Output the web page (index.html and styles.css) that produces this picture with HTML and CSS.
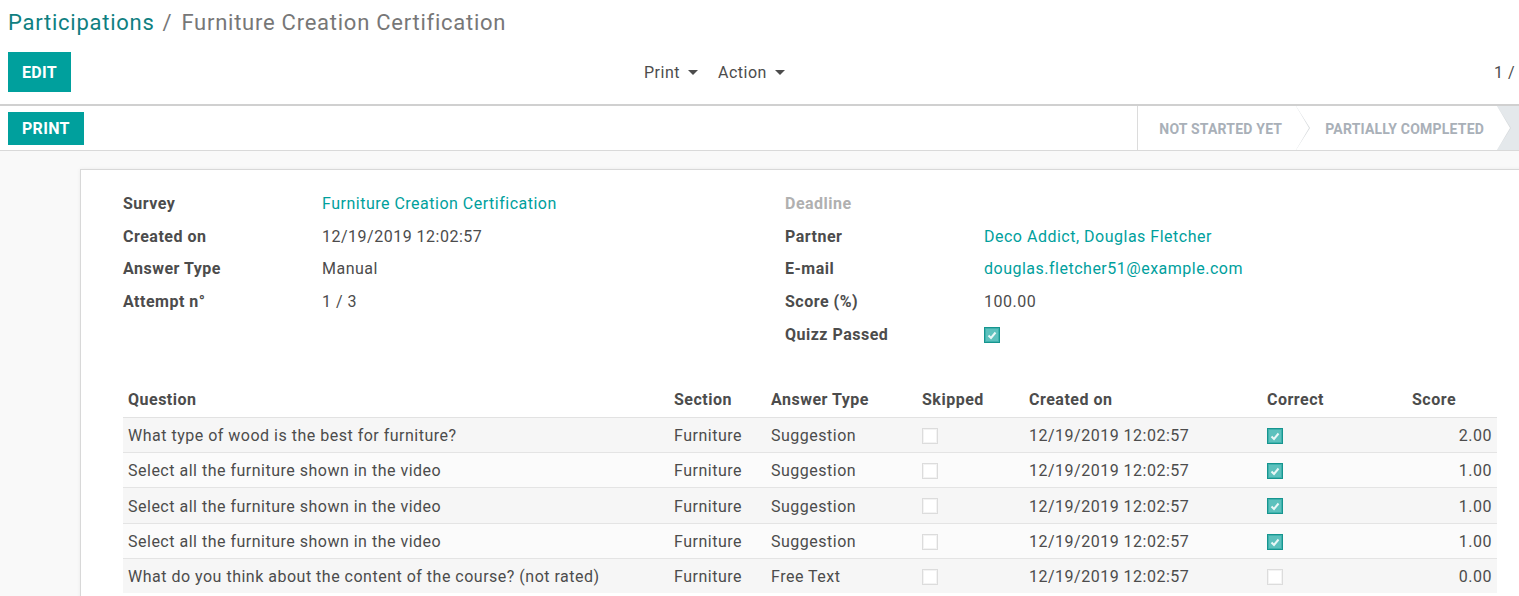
FILE: index.html
```html
<!DOCTYPE html>
<html lang="en">
<head>
<meta charset="utf-8">
<title>Participations / Furniture Creation Certification</title>
<link rel="stylesheet" href="styles.css">
</head>
<body>
<div class="cp">
  <div class="breadcrumb">
    <a class="bc-link">Participations</a><span class="bc-sep">/</span><span class="bc-cur">Furniture Creation Certification</span>
  </div>
  <div class="cp-row">
    <div class="cp-buttons"><button class="btn btn-edit">EDIT</button></div>
    <div class="cp-sidebar">
      <span class="dd">Print<span class="caret"></span></span>
      <span class="dd">Action<span class="caret"></span></span>
    </div>
    <div class="pager">1 /</div>
  </div>
</div>
<div class="statusbar">
  <div class="sb-buttons"><button class="btn btn-print">PRINT</button></div>
  <div class="sb-states">
    <div class="state first">NOT STARTED YET</div>
    <div class="state second">PARTIALLY COMPLETED</div>
    <div class="state current"></div>
  </div>
</div>
<div class="content">
  <div class="sheet">
    <div class="groups">
      <div class="group">
        <div class="label">Survey</div><div class="value"><a class="link">Furniture Creation Certification</a></div>
        <div class="label">Created on</div><div class="value">12/19/2019 12:02:57</div>
        <div class="label">Answer Type</div><div class="value">Manual</div>
        <div class="label">Attempt n°</div><div class="value">1 / 3</div>
      </div>
      <div class="group">
        <div class="label muted">Deadline</div><div class="value"></div>
        <div class="label">Partner</div><div class="value"><a class="link">Deco Addict, Douglas Fletcher</a></div>
        <div class="label">E-mail</div><div class="value"><a class="link">douglas.fletcher51@example.com</a></div>
        <div class="label">Score (%)</div><div class="value">100.00</div>
        <div class="label">Quizz Passed</div><div class="value"><span class="cb on"><svg viewBox="0 0 14 14" width="14" height="14"><path d="M3.5 7.5 L6 10 L10.5 4.5" fill="none" stroke="#e9f7f6" stroke-width="2"/></svg></span></div>
      </div>
    </div>
    <table class="list">
      <colgroup>
        <col class="c-q"><col class="c-sec"><col class="c-type"><col class="c-skip"><col class="c-date"><col class="c-corr"><col class="c-score">
      </colgroup>
      <thead>
        <tr><th>Question</th><th>Section</th><th>Answer Type</th><th>Skipped</th><th>Created on</th><th>Correct</th><th>Score</th></tr>
      </thead>
      <tbody>
        <tr><td>What type of wood is the best for furniture?</td><td>Furniture</td><td>Suggestion</td><td><span class="cb"></span></td><td>12/19/2019 12:02:57</td><td><span class="cb on"><svg viewBox="0 0 14 14" width="14" height="14"><path d="M3.5 7.5 L6 10 L10.5 4.5" fill="none" stroke="#e9f7f6" stroke-width="2"/></svg></span></td><td class="num">2.00</td></tr>
        <tr><td>Select all the furniture shown in the video</td><td>Furniture</td><td>Suggestion</td><td><span class="cb"></span></td><td>12/19/2019 12:02:57</td><td><span class="cb on"><svg viewBox="0 0 14 14" width="14" height="14"><path d="M3.5 7.5 L6 10 L10.5 4.5" fill="none" stroke="#e9f7f6" stroke-width="2"/></svg></span></td><td class="num">1.00</td></tr>
        <tr><td>Select all the furniture shown in the video</td><td>Furniture</td><td>Suggestion</td><td><span class="cb"></span></td><td>12/19/2019 12:02:57</td><td><span class="cb on"><svg viewBox="0 0 14 14" width="14" height="14"><path d="M3.5 7.5 L6 10 L10.5 4.5" fill="none" stroke="#e9f7f6" stroke-width="2"/></svg></span></td><td class="num">1.00</td></tr>
        <tr><td>Select all the furniture shown in the video</td><td>Furniture</td><td>Suggestion</td><td><span class="cb"></span></td><td>12/19/2019 12:02:57</td><td><span class="cb on"><svg viewBox="0 0 14 14" width="14" height="14"><path d="M3.5 7.5 L6 10 L10.5 4.5" fill="none" stroke="#e9f7f6" stroke-width="2"/></svg></span></td><td class="num">1.00</td></tr>
        <tr><td>What do you think about the content of the course? (not rated)</td><td>Furniture</td><td>Free Text</td><td><span class="cb"></span></td><td>12/19/2019 12:02:57</td><td><span class="cb"></span></td><td class="num">0.00</td></tr>
      </tbody>
    </table>
  </div>
</div>
</body>
</html>
```
FILE: styles.css
```css
html, body {
  margin: 0;
  padding: 0;
}
body {
  font-family: Roboto, "Noto Sans", "Liberation Sans", sans-serif;
  font-size: 16px;
  letter-spacing: 0.5px;
  color: #4c4c4c;
  background: #f9f9f9;
  overflow: hidden;
  width: 1519px;
  height: 596px;
}

/* Control panel */
.cp {
  background: #fff;
  height: 104px;
  padding: 0 0 0 8px;
  border-bottom: 2px solid #d0d0d0;
  box-sizing: content-box;
}
.breadcrumb {
  padding-top: 9px;
  height: 27px;
  line-height: 28px;
  font-size: 22px;
  letter-spacing: 0.75px;
  white-space: nowrap;
}
.bc-link {
  color: #0f7f81;
}
.bc-sep {
  color: #777;
  margin: 0 9px 0 8px;
}
.bc-cur {
  color: #777;
}
.cp-row {
  margin-top: 16px;
  display: grid;
  grid-template-columns: 636px auto 1fr;
  align-items: center;
  height: 40px;
}
.btn {
  font-family: Roboto, "Noto Sans", "Liberation Sans", sans-serif;
  background: #00a09d;
  color: #fff;
  border: 1px solid #00a09d;
  font-weight: bold;
  font-size: 16px;
  letter-spacing: 0.3px;
  padding: 0 13px;
  margin: 0;
  cursor: pointer;
}
.btn-edit {
  height: 40px;
  padding: 0 13px;
}
.btn-print {
  height: 33px;
}
.cp-sidebar {
  display: flex;
  gap: 20px;
  align-items: center;
}
.dd {
  display: inline-flex;
  align-items: center;
  color: #4c4c4c;
}
.caret {
  display: inline-block;
  width: 0;
  height: 0;
  margin-left: 8px;
  border-top: 5px solid #4c4c4c;
  border-left: 5px solid transparent;
  border-right: 5px solid transparent;
}
.pager {
  text-align: right;
  padding-right: 4px;
  white-space: nowrap;
}

/* Status bar */
.statusbar {
  background: #fff;
  height: 44px;
  border-bottom: 1px solid #d9d9d9;
  display: flex;
  align-items: stretch;
  padding-left: 8px;
}
.sb-buttons {
  flex: 1;
  display: flex;
  align-items: center;
}
.sb-states {
  display: flex;
  align-items: stretch;
}
.state {
  position: relative;
  display: flex;
  align-items: center;
  font-size: 14px;
  font-weight: bold;
  letter-spacing: 0.2px;
  color: #a9b0b8;
  white-space: nowrap;
  background: #fff;
  padding-top: 1px;
}
.state.first {
  border-left: 1px solid #dcdcdc;
  padding-left: 21px;
  padding-right: 14px;
}
.state.second {
  padding-left: 29px;
  padding-right: 13px;
}
.state.current {
  width: 22px;
  background: #e4e8eb;
}
.state.first::after,
.state.second::after {
  content: "";
  position: absolute;
  top: 0;
  right: -14px;
  width: 0;
  height: 0;
  border-top: 22px solid transparent;
  border-bottom: 22px solid transparent;
  border-left: 14px solid #d6d9dc;
  z-index: 2;
}
.state.first::before,
.state.second::before {
  content: "";
  position: absolute;
  top: 0;
  right: -13px;
  width: 0;
  height: 0;
  border-top: 22px solid transparent;
  border-bottom: 22px solid transparent;
  border-left: 13px solid #fff;
  z-index: 3;
}

/* Content / sheet */
.content {
  padding-top: 18px;
}
.sheet {
  margin-left: 80px;
  width: 1600px;
  background: #fff;
  border-top: 1px solid #d8d8d8;
  border-left: 1px solid #d8d8d8;
  box-shadow: 0 0 4px rgba(0, 0, 0, 0.06);
  padding: 17px 0 0 42px;
  height: 500px;
}
.groups {
  display: grid;
  grid-template-columns: 662px 1fr;
}
.group {
  display: grid;
  grid-template-columns: 199px 1fr;
  grid-auto-rows: 32.8px;
  align-items: center;
}
.label {
  font-weight: bold;
  color: #4c4c4c;
}
.label.muted {
  color: #b0b0b0;
}
.value {
  color: #4c4c4c;
}
.link {
  color: #00a09d;
}

/* Checkbox */
.cb {
  display: inline-block;
  width: 14px;
  height: 14px;
  border: 1px solid #dcdcdc;
  background: #fff;
  box-shadow: inset 0 0 0 1px #f3f3f3;
  vertical-align: middle;
  position: relative;
  top: -1px;
}
.cb.on {
  border: 1px solid #16958f;
  background: #5dc1bd;
  box-shadow: inset 0 0 0 1px #3fb2ae;
}
.cb svg {
  display: block;
}

/* List table */
.list {
  margin-top: 31px;
  width: 1374px;
  table-layout: fixed;
  border-collapse: collapse;
}
.c-q { width: 546px; }
.c-sec { width: 97px; }
.c-type { width: 151px; }
.c-skip { width: 107px; }
.c-date { width: 238px; }
.c-corr { width: 145px; }
.c-score { width: 90px; }
.list th {
  height: 34px;
  text-align: left;
  font-weight: bold;
  padding: 1px 5px 0;
  border-bottom: 1px solid #e2e2e2;
  white-space: nowrap;
}
.list td {
  height: 33.25px;
  padding: 1px 5px 0;
  border-top: 1px solid #e4e4e4;
  white-space: nowrap;
}
.list tbody tr:nth-child(odd) {
  background: #f6f6f6;
}
.list tbody tr:nth-child(even) {
  background: #fbfbfb;
}
.list td.num {
  text-align: right;
}
```
